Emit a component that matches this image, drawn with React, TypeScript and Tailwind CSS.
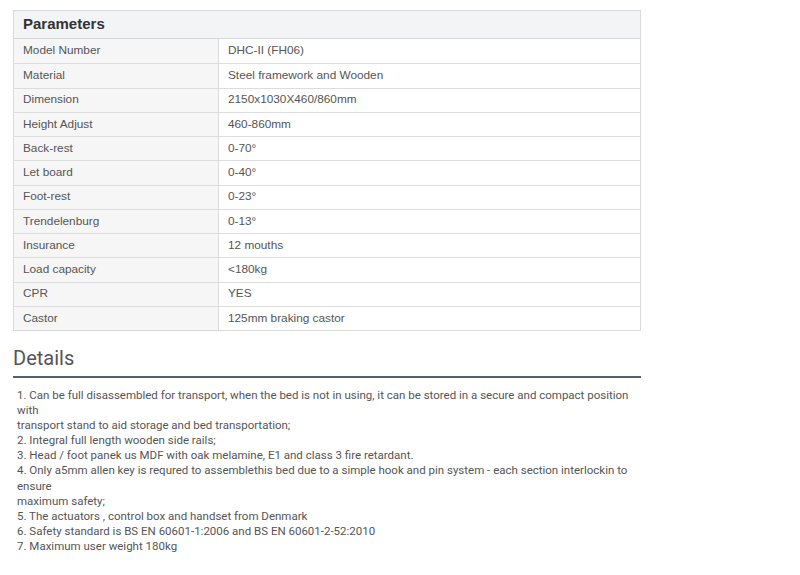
const rows: [string, string][] = [
  ["Model Number", "DHC-II (FH06)"],
  ["Material", "Steel framework and Wooden"],
  ["Dimension", "2150x1030X460/860mm"],
  ["Height Adjust", "460-860mm"],
  ["Back-rest", "0-70°"],
  ["Let board", "0-40°"],
  ["Foot-rest", "0-23°"],
  ["Trendelenburg", "0-13°"],
  ["Insurance", "12 mouths"],
  ["Load capacity", "<180kg"],
  ["CPR", "YES"],
  ["Castor", "125mm braking castor"],
];

const details = [
  "1. Can be full disassembled for transport, when the bed is not in using, it can be stored in a secure and compact position",
  "with",
  "transport stand to aid storage and bed transportation;",
  "2. Integral full length wooden side rails;",
  "3. Head / foot panek us MDF with oak melamine, E1 and class 3 fire retardant.",
  "4. Only a5mm allen key is requred to assemblethis bed due to a simple hook and pin system - each section interlockin to",
  "ensure",
  "maximum safety;",
  "5. The actuators , control box and handset from Denmark",
  "6. Safety standard is BS EN 60601-1:2006 and BS EN 60601-2-52:2010",
  "7. Maximum user weight 180kg",
];

export default function App() {
  return (
    <div className="w-[800px] h-[575px] bg-white pt-[10px] pl-[13px]">
      <div className="w-[628px] border border-[#d9d9d9] font-['Liberation_Sans',Arial,sans-serif] text-[11.8px] text-[#555]">
        <div className="h-[28px] flex items-center pl-[9px] bg-[#f2f4f6] border-b border-[#d4d6d8] text-[15px] font-bold text-[#333]">
          Parameters
        </div>
        {rows.map(([k, v], i) => (
          <div
            key={k}
            className={`flex h-[24.25px] ${i > 0 ? "border-t border-[#dcdcdc]" : ""}`}
          >
            <div className="w-[205px] shrink-0 bg-[#f6f6f6] border-r border-[#dcdcdc] flex items-center pl-[9px]">
              {k}
            </div>
            <div className="flex-1 flex items-center pl-[9px]">{v}</div>
          </div>
        ))}
      </div>
      <div className="w-[628px] mt-[14px]">
        <h2 className="font-['Roboto',sans-serif] text-[20px] leading-[26px] text-[#555] font-normal">
          Details
        </h2>
        <div className="h-[2px] bg-[#5b6068] mt-[5px]" />
        <div className="mt-[10px] pl-[4px] font-['Roboto',sans-serif] text-[11.5px] leading-[15.1px] text-[#555]">
          {details.map((d, i) => (
            <div key={i} className="whitespace-nowrap">
              {d}
            </div>
          ))}
        </div>
      </div>
    </div>
  );
}
